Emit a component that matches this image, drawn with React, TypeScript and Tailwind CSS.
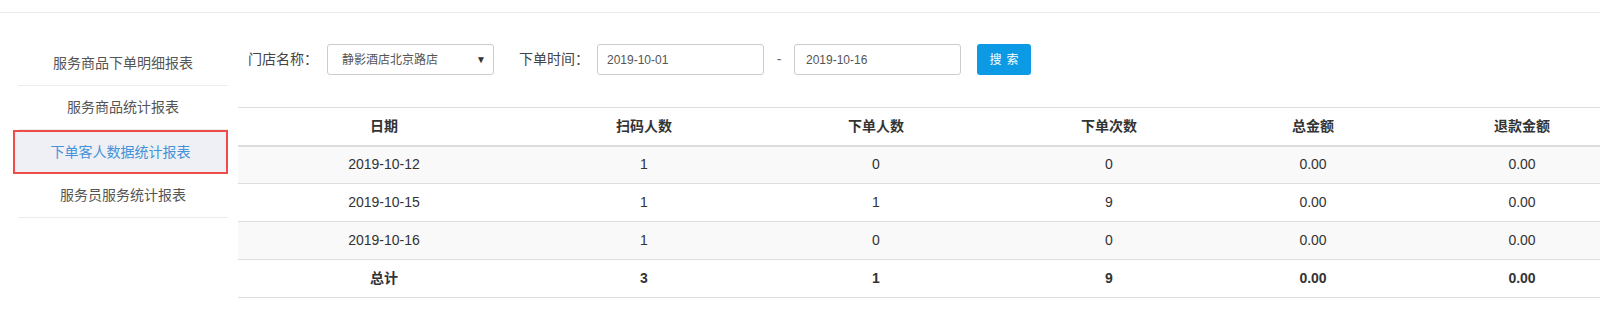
import React from "react";

const menu = ["服务商品下单明细报表", "服务商品统计报表", "下单客人数据统计报表", "服务员服务统计报表"];
const active = 2;

const cols = [
  { title: "日期", w: "w-[292px]" },
  { title: "扫码人数", w: "w-[228px]" },
  { title: "下单人数", w: "w-[236px]" },
  { title: "下单次数", w: "w-[230px]" },
  { title: "总金额", w: "w-[178px]" },
  { title: "退款金额", w: "w-[240px]" },
];

const rows = [
  ["2019-10-12", "1", "0", "0", "0.00", "0.00"],
  ["2019-10-15", "1", "1", "9", "0.00", "0.00"],
  ["2019-10-16", "1", "0", "0", "0.00", "0.00"],
];

const total = ["总计", "3", "1", "9", "0.00", "0.00"];

export default function App() {
  return (
    <div
      className="w-[1600px] h-[322px] overflow-hidden bg-white text-[#333]"
      style={{ fontFamily: '"Liberation Sans", "Noto Sans CJK SC", sans-serif' }}
    >
      {/* 顶部分隔线 */}
      <div className="h-[13px] border-b border-[#ebebeb]" />

      <div className="flex">
        {/* 左侧菜单 */}
        <aside className="ml-[18px] w-[210px] mt-[29px] shrink-0">
          {menu.map((m, i) =>
            i === active ? (
              <div
                key={m}
                className="-ml-[5px] w-[215px] h-[44px] flex items-center justify-center border-2 border-[#f04a4a] bg-[#eef0f5] text-[14px] text-[#4592d8]"
              >
                {m}
              </div>
            ) : (
              <div
                key={m}
                className="h-[44px] flex items-center justify-center border-b border-[#ececec] text-[14px] text-[#555]"
              >
                {m}
              </div>
            )
          )}
        </aside>

        {/* 主内容区 */}
        <main className="ml-[10px] pt-[31px] flex-1">
          {/* 筛选条件 */}
          <div className="flex items-center pl-[10px] h-[31px] text-[14px] text-[#444]">
            <span>门店名称：</span>
            <div className="ml-[9px] w-[167px] h-[31px] border border-[#ccc] rounded-[3px] flex items-center justify-between pl-[14px] pr-[7px] text-[12px] text-[#555]">
              <span>静影酒店北京路店</span>
              <span className="text-[10px] text-[#333]">▼</span>
            </div>
            <span className="ml-[25px]">下单时间：</span>
            <div className="ml-[8px] w-[167px] h-[31px] border border-[#ccc] rounded-[3px] flex items-center pl-[9px] text-[12px] text-[#555]">
              2019-10-01
            </div>
            <span className="w-[30px] text-center text-[#666]">-</span>
            <div className="w-[167px] h-[31px] border border-[#ccc] rounded-[3px] flex items-center pl-[11px] text-[12px] text-[#555]">
              2019-10-16
            </div>
            <button className="ml-[16px] w-[54px] h-[31px] rounded-[3px] bg-[#0d9ae4] text-white text-[12px] tracking-[5px] pl-[5px]">
              搜索
            </button>
          </div>

          {/* 数据表格 */}
          <table className="mt-[32px] border-collapse table-fixed w-[1404px] text-[14px] text-[#333]">
            <thead>
              <tr className="h-[38px] border-t border-[#ddd] border-b-2">
                {cols.map((c) => (
                  <th key={c.title} className={`${c.w} font-bold text-center`}>
                    {c.title}
                  </th>
                ))}
              </tr>
            </thead>
            <tbody>
              {rows.map((r, i) => (
                <tr
                  key={r[0]}
                  className={`h-[38px] border-t border-[#ddd] ${i % 2 === 0 ? "bg-[#f9f9f9]" : "bg-white"}`}
                >
                  {r.map((v, j) => (
                    <td key={j} className="text-center">
                      {v}
                    </td>
                  ))}
                </tr>
              ))}
              <tr className="h-[38px] border-t border-b border-[#ddd]">
                {total.map((v, j) => (
                  <td key={j} className="text-center font-bold">
                    {v}
                  </td>
                ))}
              </tr>
            </tbody>
          </table>
        </main>
      </div>
    </div>
  );
}
